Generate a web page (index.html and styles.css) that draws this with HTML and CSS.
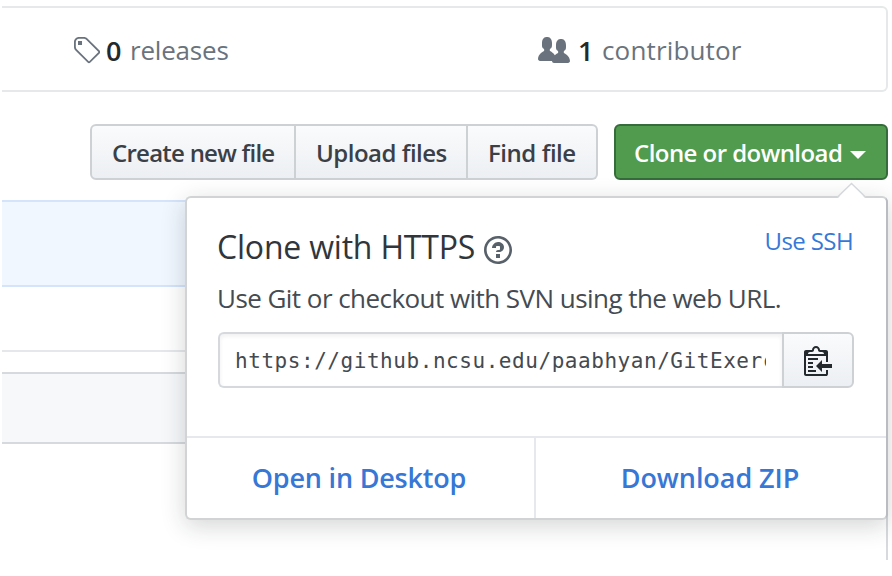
FILE: index.html
```html
<!DOCTYPE html>
<html lang="en">
<head>
<meta charset="utf-8">
<title>Repository</title>
<link rel="stylesheet" href="styles.css">
</head>
<body>
<main class="repo">
  <ul class="summary">
    <li class="stat">
      <svg class="icon" width="28" height="32" viewBox="0 0 14 16"><path fill-rule="evenodd" d="M7.73 1.73C7.26 1.26 6.62 1 5.96 1H3.5C2.13 1 1 2.13 1 3.5v2.47c0 .66.27 1.3.73 1.77l6.06 6.06c.39.39 1.02.39 1.41 0l4.59-4.59a.996.996 0 000-1.41L7.73 1.73zM2.38 7.09c-.31-.3-.47-.7-.47-1.13V3.5c0-.88.72-1.59 1.59-1.59h2.47c.42 0 .83.16 1.13.47l6.14 6.13-4.73 4.73-6.13-6.15zM3.01 3h2v2H3V3h.01z"/></svg>
      <span class="num">0</span><span class="label-releases">releases</span>
    </li>
    <li class="stat stat-people">
      <svg class="icon" width="32" height="32" viewBox="0 0 16 16"><path fill-rule="evenodd" d="M16 12.999c0 .439-.45 1-1 1H7.995c-.539 0-.994-.447-.995-.999H1c-.54 0-1-.561-1-1 0-2.634 3-4 3-4s.229-.409 0-1c-.841-.621-1.058-.59-1-3 .058-2.419 1.367-3 2.5-3s2.442.58 2.5 3c.058 2.41-.159 2.379-1 3-.229.59 0 1 0 1s1.549.711 2.42 2.088C9.196 9.369 10 8.999 10 8.999s.229-.409 0-1c-.841-.62-1.058-.59-1-3 .058-2.419 1.367-3 2.5-3s2.437.581 2.495 3c.059 2.41-.158 2.38-1 3-.229.59 0 1 0 1s3.005 1.366 3.005 4z"/></svg>
      <span class="num">1</span><span class="label-contributor">contributor</span>
    </li>
  </ul>

  <div class="toolbar">
    <div class="group">
      <button class="btn create">Create new file</button>
      <button class="btn upload">Upload files</button>
      <button class="btn find">Find file</button>
    </div>
    <div class="clone">
      <button class="btn primary"><span>Clone or download</span><i class="caret"></i></button>
      <section class="popover">
        <svg class="arrow" width="32" height="17" viewBox="0 0 32 17"><path d="M1 17 15.500 1.500 30 17z" fill="#fff"/><path d="M1 15.500 15.500 1.500 30 15.500" fill="none" stroke="#d5d8da" stroke-width="1.500"/></svg>
        <div class="popover-body">
          <header class="heading">
            <h4>Clone with HTTPS</h4>
            <svg class="icon help" width="28" height="32" viewBox="0 0 14 16"><path fill-rule="evenodd" d="M6 10h2v2H6v-2zm4-3.500C10 8.640 8 9 8 9H6c0-.55.45-1 1-1h.5c.28 0 .5-.22.5-.5v-1c0-.28-.22-.5-.5-.5h-1c-.28 0-.5.22-.5.5V7H4c0-1.500 1.500-3 3-3s3 1 3 2.500zM7 2.300c3.140 0 5.700 2.560 5.700 5.700s-2.560 5.700-5.700 5.700A5.710 5.710 0 011.300 8c0-3.140 2.560-5.700 5.700-5.700zM7 1C3.140 1 0 4.140 0 8s3.140 7 7 7 7-3.140 7-7-3.140-7-7-7z"/></svg>
            <a class="ssh">Use SSH</a>
          </header>
          <p class="hint">Use Git or checkout with SVN using the web URL.</p>
          <div class="url-row">
            <div class="url"><span>https://github.ncsu.edu/paabhyan/GitExerc</span></div>
            <button class="btn copy" aria-label="Copy"><svg width="28" height="32" viewBox="0 0 14 16"><path fill-rule="evenodd" d="M2 13h4v1H2v-1zm5-6H2v1h5V7zm2 3V8l-3 3 3 3v-2h5v-2H9zM4.500 9H2v1h2.500V9zM2 12h2.500v-1H2v1zm9 1h1v2c-.02.28-.11.52-.3.7-.19.18-.42.28-.7.3H1c-.55 0-1-.45-1-1V4c0-.55.45-1 1-1h3c0-1.110.89-2 2-2 1.110 0 2 .89 2 2h3c.55 0 1 .45 1 1v5h-1V6H1v9h10v-2zM2 5h8c0-.55-.45-1-1-1H8c-.55 0-1-.45-1-1s-.45-1-1-1-1 .45-1 1-.45 1-1 1H3c-.55 0-1 .45-1 1z"/></svg></button>
          </div>
        </div>
        <footer class="actions">
          <a class="desktop">Open in Desktop</a>
          <a class="zip">Download ZIP</a>
        </footer>
      </section>
    </div>
  </div>

  <div class="commit"></div>
  <div class="row"></div>
  <div class="readme"><div class="readme-head"></div></div>
</main>
</body>
</html>
```
FILE: styles.css
```css
* { box-sizing: border-box; }
body { margin: 0; background: #fff; color: #24292e; font-family: "Open Sans", "Noto Sans", sans-serif; overflow: hidden; }
.repo { width: 886px; height: 560px; margin-left: 2px; padding-top: 6px; display: flex; flex-direction: column; }

.summary { flex: none; display: flex; list-style: none; margin: 0; padding: 0; height: 86px; border: 2px solid #e6e9e9; border-left: 0; border-radius: 0 6px 6px 0; }
.stat { width: 466px; padding: 2px 0 0 70px; display: flex; align-items: center; font-size: 26px; color: #6a737d; white-space: nowrap; }
.stat-people { width: auto; padding-left: 70px; }
.icon { flex: none; margin-top: 2px; fill: #6a737d; }
.num { width: 24px; margin-left: 6px; font-size: 27px; font-weight: 600; color: #24292e; }
.stat-people .num { margin-left: 8px; }
.label-releases { letter-spacing: -0.2px; }
.label-contributor { letter-spacing: 0.15px; }

.toolbar { flex: none; display: flex; justify-content: space-between; margin: 32px 0 20px 88px; height: 56px; }
.group { display: flex; width: 508px; }
.btn { height: 56px; padding: 1px 0 0 20px; border: 2px solid #ced1d4; background: linear-gradient(#fafbfc, #eceff3); font: 600 24px "Open Sans", "Noto Sans", sans-serif; color: #3a4046; text-align: left; white-space: nowrap; }
.create { width: 206px; border-radius: 6px 0 0 6px; letter-spacing: -0.75px; }
.upload { width: 172px; border-left: 0; letter-spacing: -0.5px; }
.find { width: 130px; border-left: 0; border-radius: 0 6px 6px 0; letter-spacing: -0.45px; }
.clone { position: relative; }
.primary { width: 274px; display: flex; align-items: center; padding-left: 18px; gap: 8px; background: #509b4d; border-color: #366b3b; border-radius: 6px; color: #fff; letter-spacing: -0.55px; }
.caret { width: 0; height: 0; border: 8px solid transparent; border-top-color: #fff; border-bottom: 0; margin-top: 5px; }

.popover { position: absolute; right: 0; top: 72px; width: 703px; height: 324px; display: flex; flex-direction: column; border: 2px solid #d1d3d4; border-right-color: #b9bcc3; border-radius: 6px; background: #fff; box-shadow: 0 6px 24px rgba(27,31,35,.19); }
.arrow { position: absolute; right: 18px; top: -16px; }
.popover-body { flex: 1; padding: 28px 32px 0 31px; }
.heading { display: flex; align-items: center; height: 40px; }
h4 { margin: 1px 0 0 -1px; width: 267px; font-size: 32px; line-height: 40px; font-weight: 400; letter-spacing: -0.2px; color: #30363b; white-space: nowrap; }
.help { margin-top: 8px; fill: #586069; }
.ssh { margin: 0 1px 11px auto; font-size: 24px; line-height: 30px; letter-spacing: -0.6px; color: #3579d8; white-space: nowrap; }
.hint { margin: 17px 0 19px -1px; height: 30px; line-height: 30px; font-size: 26px; color: #444b52; letter-spacing: -0.55px; white-space: nowrap; }
.url-row { display: flex; height: 56px; }
.url { width: 564px; padding: 0 16px 0 15px; border: 2px solid #d5d8dd; border-right: 0; border-radius: 6px 0 0 6px; box-shadow: inset 0 2px 4px rgba(27,31,35,.07); }
.url span { display: block; overflow: hidden; font: 21px/54px "DejaVu Sans Mono", monospace; height: 52px; letter-spacing: 0.55px; color: #444a50; white-space: nowrap; }
.copy { width: 72px; padding: 0 0 0 20px; display: flex; align-items: center; border-radius: 0 6px 6px 0; }
.copy svg { fill: #24292e; }
.actions { display: flex; height: 82px; border-top: 2px solid #e6e8ed; }
.actions a { display: flex; align-items: center; justify-content: center; padding-bottom: 1px; font-size: 27px; font-weight: 600; color: #3777d6; white-space: nowrap; }
.actions .desktop { width: 349px; padding-right: 3px; border-right: 2px solid #e6e8ed; letter-spacing: -0.2px; }
.actions .zip { flex: 1; padding-right: 2px; letter-spacing: -0.05px; }

.commit { flex: none; height: 87px; border: 2px solid #d3e4fb; border-left: 0; background: #f0f7ff; }
.row { flex: none; height: 65px; border: solid #e5e8eb; border-width: 0 2px 2px 0; }
.readme { flex: 1; margin-top: 20px; border: solid #d6d9dd; border-width: 2px 2px 0 0; }
.readme-head { height: 70px; background: #f6f8fa; border-bottom: 2px solid #d6d9dd; }
```
